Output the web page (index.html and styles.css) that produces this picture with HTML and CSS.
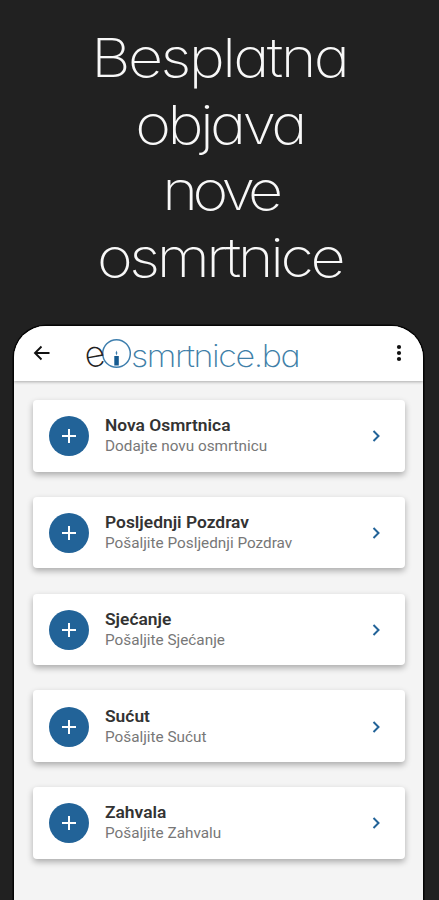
FILE: index.html
```
<!DOCTYPE html>
<html lang="bs">
<head>
  <meta charset="UTF-8">
  <title>eOsmrtnice.ba</title>
  <link rel="stylesheet" href="styles.css">
</head>
<body>
  <h1 class="headline">
    <span class="line line-1">Besplatna</span>
    <span class="line line-2">objava</span>
    <span class="line line-3">nove</span>
    <span class="line line-4">osmrtnice</span>
  </h1>

  <div class="phone">
    <header class="topbar">
      <svg class="back" width="18" height="16" viewBox="0 0 18 16" fill="none" stroke="#111" stroke-width="1.9"><path d="M16.500 8H2M8.500 1.500L2 8l6.500 6.500"/></svg>
      <div class="logo">
        <span class="logo-e">e</span>
        <svg class="logo-o" width="31" height="31" viewBox="0 0 31 31">
          <circle cx="15.500" cy="15.500" r="13.800" fill="none" stroke="#3f7fae" stroke-width="1.500"/>
          <path d="M15.500 12.500q1.800 2.500 0 5q-1.800-2.500 0-5z" fill="#3f7fae"/>
          <path d="M13.300 18h4.500v9.500h-4.500z" fill="#155a90"/>
        </svg>
        <span class="logo-text">smrtnice.ba</span>
      </div>
      <svg class="menu" width="6" height="18" viewBox="0 0 6 18" fill="#111"><circle cx="3" cy="3" r="2.100"/><circle cx="3" cy="9" r="2.100"/><circle cx="3" cy="15" r="2.100"/></svg>
    </header>

    <main class="list">
      <div class="card">
        <div class="plus"><svg width="14" height="14" viewBox="0 0 14 14" stroke="#fff" stroke-width="2"><path d="M7 0v14M0 7h14"/></svg></div>
        <div class="text">
          <div class="title">Nova Osmrtnica</div>
          <div class="sub">Dodajte novu osmrtnicu</div>
        </div>
        <svg class="arrow" width="9" height="12" viewBox="0 0 9 12"><path d="M1.500 1l5 5l-5 5"/></svg>
      </div>
      <div class="card">
        <div class="plus"><svg width="14" height="14" viewBox="0 0 14 14" stroke="#fff" stroke-width="2"><path d="M7 0v14M0 7h14"/></svg></div>
        <div class="text">
          <div class="title">Posljednji Pozdrav</div>
          <div class="sub">Pošaljite Posljednji Pozdrav</div>
        </div>
        <svg class="arrow" width="9" height="12" viewBox="0 0 9 12"><path d="M1.500 1l5 5l-5 5"/></svg>
      </div>
      <div class="card">
        <div class="plus"><svg width="14" height="14" viewBox="0 0 14 14" stroke="#fff" stroke-width="2"><path d="M7 0v14M0 7h14"/></svg></div>
        <div class="text">
          <div class="title">Sjećanje</div>
          <div class="sub">Pošaljite Sjećanje</div>
        </div>
        <svg class="arrow" width="9" height="12" viewBox="0 0 9 12"><path d="M1.500 1l5 5l-5 5"/></svg>
      </div>
      <div class="card">
        <div class="plus"><svg width="14" height="14" viewBox="0 0 14 14" stroke="#fff" stroke-width="2"><path d="M7 0v14M0 7h14"/></svg></div>
        <div class="text">
          <div class="title">Sućut</div>
          <div class="sub">Pošaljite Sućut</div>
        </div>
        <svg class="arrow" width="9" height="12" viewBox="0 0 9 12"><path d="M1.500 1l5 5l-5 5"/></svg>
      </div>
      <div class="card">
        <div class="plus"><svg width="14" height="14" viewBox="0 0 14 14" stroke="#fff" stroke-width="2"><path d="M7 0v14M0 7h14"/></svg></div>
        <div class="text">
          <div class="title">Zahvala</div>
          <div class="sub">Pošaljite Zahvalu</div>
        </div>
        <svg class="arrow" width="9" height="12" viewBox="0 0 9 12"><path d="M1.500 1l5 5l-5 5"/></svg>
      </div>
    </main>
  </div>
</body>
</html>
```
FILE: styles.css
```
* { box-sizing: border-box; }
body { margin: 0; height: 900px; overflow: hidden; background: #212121; font-family: Roboto, sans-serif; display: flex; flex-direction: column; }

.headline { margin: 0; padding-top: 25px; height: 326px; flex: none; color: #f8f8f8; font-family: Inter, sans-serif; font-size: 54px; font-weight: 250; line-height: 66.500px; text-align: center; font-feature-settings: "cv11"; }
.line { display: block; width: fit-content; margin: 0 auto; white-space: nowrap; transform: scaleX(1.13); }
.line-1 { letter-spacing: -2.300px; }
.line-2 { letter-spacing: -3.200px; }
.line-3 { letter-spacing: -5px; }
.line-4 { letter-spacing: -3px; }

.phone { flex: 1; margin: 0 16px 0 14px; background: #f4f4f4; border-radius: 32px 32px 0 0; box-shadow: 0 0 0 1.500px #050505; overflow: hidden; }
.topbar { height: 55px; background: #fff; display: flex; align-items: center; padding: 0 21px 1px 19px; box-shadow: 0 1px 3px rgba(0,0,0,.3); }
.menu { margin-left: auto; }

.logo { display: flex; align-items: center; margin-left: 33px; height: 54px; font-family: Inter, sans-serif; font-feature-settings: "cv11"; line-height: 54px; white-space: nowrap; }
.logo-e { width: 17px; font-size: 36px; font-weight: 200; color: #222; padding-top: 1px; transform: rotate(-10deg); }
.logo-o { flex: none; }
.logo-text { font-size: 31px; font-weight: 200; color: #3f7fa8; padding-top: 5px; margin-left: -1px; letter-spacing: -1.300px; transform: scaleX(1.1); transform-origin: left; }

.list { padding: 19px 18px 0 18.500px; display: flex; flex-direction: column; gap: 25.300px; }
.card { height: 71.500px; background: #fff; border-radius: 4px; box-shadow: 0 3px 6px rgba(0,0,0,.3); display: flex; align-items: center; padding: 1px 24px 0 16.500px; }
.plus { width: 40px; height: 40px; border-radius: 50%; background: #226398; display: flex; align-items: center; justify-content: center; }
.text { margin-left: 16px; flex: 1; white-space: nowrap; }
.title { font-size: 17.400px; font-weight: 600; line-height: 21px; color: #333; }
.sub { font-size: 15.300px; line-height: 21px; color: #777; }
.arrow { fill: none; stroke: #226398; stroke-width: 2; }
```
